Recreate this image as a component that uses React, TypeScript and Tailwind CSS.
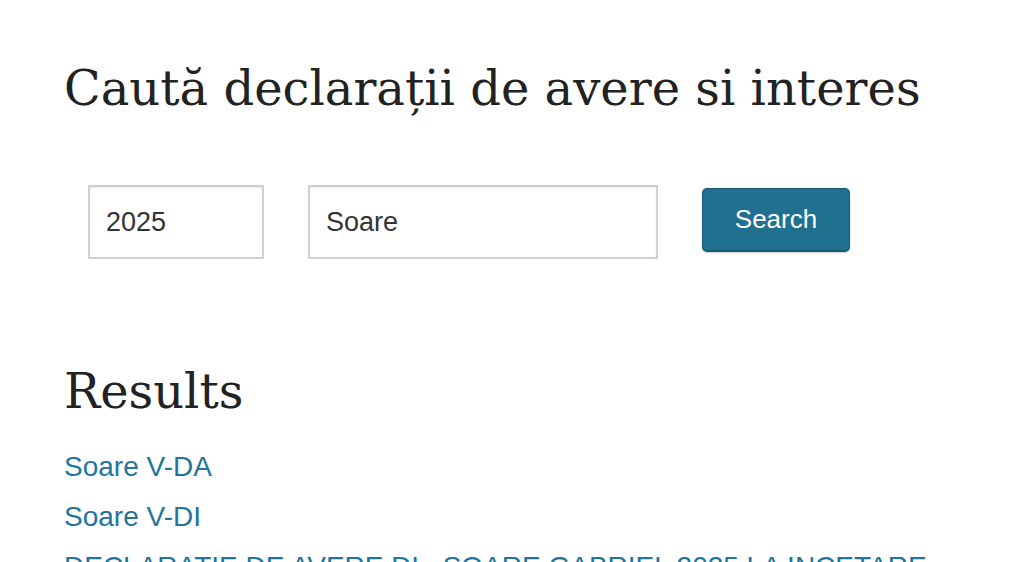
export default function App() {
  return (
    <div className="h-[562px] bg-white pl-[64px] pt-[58px] overflow-hidden">
      <h1 className="text-[48px] leading-[60px] text-[#222222] font-['DejaVu_Serif',serif]">
        Caută declarații de avere si interes
      </h1>
      <div className="flex items-center gap-[44px] mt-[67px] pl-[24px] font-['Liberation_Sans',Arial,sans-serif]">
        <input
          defaultValue="2025"
          className="w-[176px] h-[74px] border-2 border-[#d0d0d0] px-[16px] text-[27px] text-[#333] shadow-[inset_0_1px_2px_rgba(0,0,0,0.08)] outline-none"
        />
        <input
          defaultValue="Soare"
          className="w-[350px] h-[74px] border-2 border-[#d0d0d0] px-[16px] text-[27px] text-[#333] shadow-[inset_0_1px_2px_rgba(0,0,0,0.08)] outline-none"
        />
        <button className="w-[148px] h-[64px] mb-[4px] rounded-[5px] bg-[#21708f] border border-[#175a74] border-b-2 text-white text-[26px] shadow-[0_1px_2px_rgba(0,0,0,0.2)]">
          Search
        </button>
      </div>
      <h2 className="mt-[102px] text-[48px] leading-[60px] text-[#222222] font-['DejaVu_Serif',serif]">
        Results
      </h2>
      <ul className="mt-[21px] font-['Liberation_Sans',Arial,sans-serif] text-[28px] leading-[50px] text-[#21759b]">
        <li><a href="#">Soare V-DA</a></li>
        <li><a href="#">Soare V-DI</a></li>
        <li><a href="#">DECLARATIE DE AVERE DL. SOARE GABRIEL 2025 LA INCETARE</a></li>
      </ul>
    </div>
  );
}
